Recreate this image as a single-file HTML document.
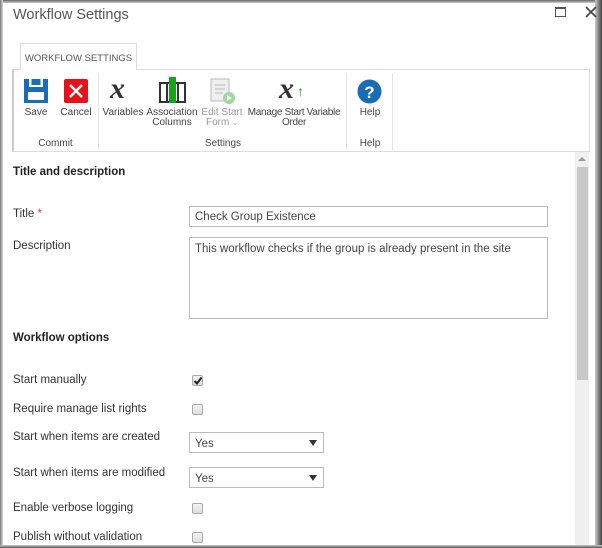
<!DOCTYPE html>
<html><head><style>
*{box-sizing:border-box;margin:0;padding:0}
body{width:602px;height:548px;overflow:hidden;background:#fff;font-family:"Liberation Sans",sans-serif;position:relative;color:#444}
.a{position:absolute}
.lbl{position:absolute;font-size:11.5px;color:#333}
.rb{position:absolute;font-size:10px;color:#444;text-align:center;line-height:10px;white-space:nowrap}
.cb{position:absolute;width:11px;height:11px;border:1px solid #aaa;border-radius:2px;background:linear-gradient(#f4f4f4,#ddd)}
.sel{position:absolute;border:1px solid #bbb;background:#fff;font-size:11.5px;color:#444;padding:5px 0 0 5px}
.sel:after{content:"";position:absolute;right:6px;top:7px;border:4px solid transparent;border-top:6px solid #333;border-bottom:0}
</style></head><body>
<div class="a" style="left:0;top:0;width:602px;height:3px;background:linear-gradient(#666,#ccc)"></div>
<div class="a" style="left:0;top:0;width:3px;height:548px;background:linear-gradient(90deg,#777,#ddd)"></div>
<div class="a" style="right:0;top:0;width:7px;height:548px;background:linear-gradient(90deg,#ccc,#777 60%,#444)"></div>
<div class="a" style="left:0;bottom:0;width:602px;height:3px;background:linear-gradient(#ccc,#555)"></div>

<div class="a" style="left:13px;top:7px;font-size:14.5px;color:#555">Workflow Settings</div>
<div class="a" style="left:555px;top:7px;width:11px;height:10px;border:1px solid #555;border-top-width:2px"></div>
<svg class="a" style="left:585px;top:6px" width="12" height="12"><path d="M1 1L11 11M11 1L1 11" stroke="#444" stroke-width="1.6"/></svg>

<div class="a" style="left:20px;top:43px;width:117px;height:27px;border:1px solid #ddd;border-bottom:none;background:#fff;z-index:2;font-size:9.5px;color:#555;text-align:center;padding-top:9px">WORKFLOW SETTINGS</div>
<div class="a" style="left:12px;top:69px;width:578px;height:83px;border:1px solid #ddd;border-left:2px solid #ccc"></div>
<div class="a" style="left:98px;top:73px;width:1px;height:77px;background:#e4e4e4"></div>
<div class="a" style="left:346px;top:73px;width:1px;height:77px;background:#e4e4e4"></div>
<div class="a" style="left:392px;top:73px;width:1px;height:77px;background:#e4e4e4"></div>

<svg class="a" style="left:24px;top:79px" width="24" height="24" viewBox="0 0 24 24"><path d="M0 0h24v24H0z" fill="#1a6db5"/><rect x="5" y="0" width="2.5" height="8" fill="#fff"/><rect x="16.5" y="0" width="2.5" height="8" fill="#fff"/><rect x="5" y="6" width="14" height="2" fill="#fff"/><rect x="4" y="13" width="16" height="8" fill="#fff"/></svg>
<div class="rb" style="left:20px;top:108px;width:32px">Save</div>
<svg class="a" style="left:64px;top:79px" width="24" height="24"><rect width="24" height="24" rx="2" fill="#e8101a"/><path d="M6 6L18 18M18 6L6 18" stroke="#fff" stroke-width="2.5"/></svg>
<div class="rb" style="left:58px;top:108px;width:36px">Cancel</div>
<div class="rb" style="left:13px;top:139px;width:85px">Commit</div>

<div class="a" style="left:110px;top:72px;font:italic bold 30px 'Liberation Serif',serif;color:#333">x</div>
<div class="rb" style="left:102px;top:108px;width:42px">Variables</div>
<svg class="a" style="left:159px;top:77px" width="27" height="26"><rect x="1" y="6" width="25" height="19" fill="#fff" stroke="#333" stroke-width="2"/><rect x="10" y="0" width="7" height="26" fill="#17a31a"/><line x1="8" y1="7" x2="8" y2="25" stroke="#333" stroke-width="2"/><line x1="19" y1="7" x2="19" y2="25" stroke="#333" stroke-width="2"/></svg>
<div class="rb" style="left:146px;top:108px;width:52px">Association<br>Columns</div>
<svg class="a" style="left:210px;top:78px" width="26" height="27"><rect x="1" y="1" width="18" height="22" fill="#eee" stroke="#bbb"/><path d="M5 7h10M5 11h10M5 15h8" stroke="#bbb"/><circle cx="19" cy="20" r="6" fill="#9bd89b"/><path d="M17 17l5 3-5 3z" fill="#fff"/></svg>
<div class="rb" style="left:200px;top:108px;width:44px;color:#999">Edit Start<br>Form <span style="font-size:7px">⌄</span></div>
<div class="a" style="left:279px;top:72px;font:italic bold 30px 'Liberation Serif',serif;color:#333">x</div>
<div class="a" style="left:297px;top:83px;font:bold 14px 'Liberation Sans';color:#1aa31a">↑</div>
<div class="rb" style="left:245px;top:108px;width:98px;letter-spacing:-0.3px">Manage Start Variable<br>Order</div>
<div class="rb" style="left:100px;top:139px;width:246px">Settings</div>
<svg class="a" style="left:357px;top:79px" width="25" height="25"><circle cx="12.5" cy="12.5" r="12" fill="#1a6db5"/><text x="12.5" y="19" text-anchor="middle" font-family="Liberation Sans" font-weight="bold" font-size="17" fill="#fff">?</text></svg>
<div class="rb" style="left:352px;top:108px;width:36px">Help</div>
<div class="rb" style="left:348px;top:139px;width:44px">Help</div>

<div class="a" style="left:575px;top:152px;width:14px;height:393px;background:#f0f0f0"></div>
<div class="a" style="left:577px;top:167px;width:11px;height:213px;background:#c8c8c8"></div>
<div class="a" style="left:578px;top:157px;border:4px solid transparent;border-bottom:4px solid #999;border-top:0"></div>

<div class="lbl" style="left:13px;top:166px;font-weight:bold;color:#222">Title and description</div>
<div class="lbl" style="left:13px;top:208px">Title <span style="color:#b44">*</span></div>
<div class="a" style="left:189px;top:206px;width:359px;height:21px;border:1px solid #bbb;font-size:11.5px;color:#444;padding:4px 0 0 5px">Check Group Existence</div>
<div class="lbl" style="left:13px;top:240px">Description</div>
<div class="a" style="left:189px;top:237px;width:359px;height:82px;border:1px solid #bbb;font-size:11.5px;color:#444;padding:5px 0 0 5px">This workflow checks if the group is already present in the site</div>
<div class="lbl" style="left:13px;top:332px;font-weight:bold;color:#222">Workflow options</div>
<div class="lbl" style="left:13px;top:374px">Start manually</div>
<div class="cb" style="left:192px;top:375px"></div>
<svg class="a" style="left:193px;top:376px" width="10" height="10"><path d="M1.5 5L4 7.5L8.5 1.5" stroke="#222" stroke-width="2" fill="none"/></svg>
<div class="lbl" style="left:13px;top:403px">Require manage list rights</div>
<div class="cb" style="left:192px;top:404px"></div>
<div class="lbl" style="left:13px;top:431px">Start when items are created</div>
<div class="sel" style="left:189px;top:432px;width:135px;height:21px">Yes</div>
<div class="lbl" style="left:13px;top:467px">Start when items are modified</div>
<div class="sel" style="left:189px;top:467px;width:135px;height:21px">Yes</div>
<div class="lbl" style="left:13px;top:502px">Enable verbose logging</div>
<div class="cb" style="left:192px;top:503px"></div>
<div class="lbl" style="left:13px;top:531px">Publish without validation</div>
<div class="cb" style="left:192px;top:532px"></div>
</body></html>
